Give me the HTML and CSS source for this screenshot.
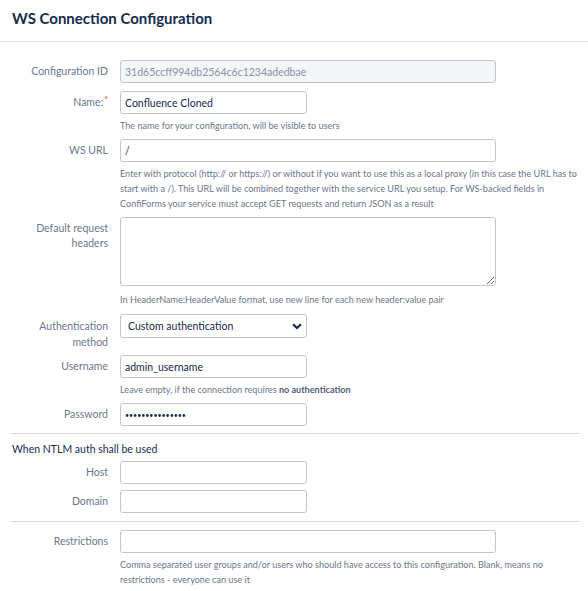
FILE: index.html
```html
<!DOCTYPE html>
<html>
<head>
<meta charset="utf-8">
<link rel="stylesheet" href="styles.css">
</head>
<body>
<div class="header"><h1 class="title">WS Connection Configuration</h1></div>
<form class="form">
  <div class="row r-id">
    <label class="lbl">Configuration ID</label>
    <div class="field"><input class="inp long ro" value="31d65ccff994db2564c6c1234adedbae" readonly></div>
  </div>
  <div class="row r-name">
    <label class="lbl">Name:<sup class="req">*</sup></label>
    <div class="field"><input class="inp short" value="Confluence Cloned">
      <div class="help">The name for your configuration, will be visible to users</div></div>
  </div>
  <div class="row r-url">
    <label class="lbl">WS URL</label>
    <div class="field"><input class="inp long" value="/">
      <div class="help">Enter with protocol (http:// or https://) or without if you want to use this as a local proxy (in this case the URL has to start with a /). This URL will be combined together with the service URL you setup. For WS-backed fields in ConfiForms your service must accept GET requests and return JSON as a result</div></div>
  </div>
  <div class="row r-hdr">
    <label class="lbl">Default request headers</label>
    <div class="field"><textarea class="inp long ta"></textarea>
      <div class="help help-ta">In HeaderName:HeaderValue format, use new line for each new header:value pair</div></div>
  </div>
  <div class="row r-auth">
    <label class="lbl lbl2">Authentication method</label>
    <div class="field"><div class="select short"><span>Custom authentication</span>
      <svg class="chev" width="10" height="7" viewBox="0 0 10 7"><path d="M1 1.2 L5 5 L9 1.2" fill="none" stroke="#172b4d" stroke-width="2.2"/></svg></div></div>
  </div>
  <div class="row r-user">
    <label class="lbl">Username</label>
    <div class="field"><input class="inp short" value="admin_username">
      <div class="help">Leave empty, if the connection requires <b>no authentication</b></div></div>
  </div>
  <div class="row r-pass">
    <label class="lbl">Password</label>
    <div class="field"><input class="inp short pw" type="password" value="passwordpasswor"></div>
  </div>
  <hr class="sep sep1">
  <div class="section">When NTLM auth shall be used</div>
  <div class="row r-host">
    <label class="lbl">Host</label>
    <div class="field"><input class="inp short"></div>
  </div>
  <div class="row r-dom">
    <label class="lbl">Domain</label>
    <div class="field"><input class="inp short"></div>
  </div>
  <hr class="sep sep2">
  <div class="row r-res">
    <label class="lbl">Restrictions</label>
    <div class="field"><input class="inp long">
      <div class="help">Comma separated user groups and/or users who should have access to this configuration. Blank, means no restrictions - everyone can use it</div></div>
  </div>
</form>
</body>
</html>
```
FILE: styles.css
```css
html, body { margin: 0; padding: 0; background: #fff; }
body { font-family: Lato, "Open Sans", sans-serif; color: #172b4d; width: 588px; }
.header { height: 42px; border-bottom: 1px solid #e4e6ea; padding: 0 12px; box-sizing: border-box; }
.title { margin: 0; padding-top: 8px; font-size: 15px; font-weight: 700; line-height: 20px; color: #172b4d; }
.form { padding-top: 18px; }
.row { display: grid; grid-template-columns: 108px 1fr; column-gap: 12px; align-items: start; padding-right: 8px; }
.lbl { text-align: right; color: #6b778c; font-size: 10.5px; line-height: 15px; padding: 4px 0 0 28px; box-sizing: border-box; }
.lbl2 { line-height: 16px; }
.req { color: #de350b; font-size: 9px; vertical-align: top; position: relative; top: -3px; margin-left: 1px; }
.field { display: flex; flex-direction: column; align-items: flex-start; }
.inp { box-sizing: border-box; height: 23px; border: 1px solid #c1c7d0; border-radius: 3px; font-family: inherit; font-size: 10.5px; color: #172b4d; padding: 0 4px; background: #fff; margin: 0; outline: none; }
.long { width: 376px; }
.short { width: 187px; }
.ro { background: #f4f5f7; color: #8993a4; }
.pw { font-size: 7px; }
.ta { height: 69px; resize: vertical; padding: 4px; display: block; }
.help { font-size: 9.1px; line-height: 15px; color: #6b778c; margin-top: 4px; }
.help b { font-weight: 700; color: #505f79; }
.help-ta { margin-top: 6px; }
.select { box-sizing: border-box; height: 24px; border: 1px solid #c1c7d0; border-radius: 3px; display: flex; align-items: center; justify-content: space-between; padding: 0 4px 0 7px; font-size: 10.5px; color: #172b4d; }
.chev { display: block; }
.r-name { margin-top: 8px; }
.r-url { margin-top: 6px; }
.r-hdr { margin-top: 6px; }
.r-auth { margin-top: 7px; }
.r-user { margin-top: 5px; }
.r-pass { margin-top: 6px; }
.sep { border: 0; border-top: 1px solid #d5d8dd; margin: 7px 8px 0 11px; height: 0; }
.section { font-size: 10.5px; line-height: 15px; color: #172b4d; padding-left: 12px; margin-top: 8px; }
.r-host { margin-top: 4px; }
.r-dom { margin-top: 6px; }
.sep2 { margin-top: 8px; }
.r-res { margin-top: 8px; }
```
